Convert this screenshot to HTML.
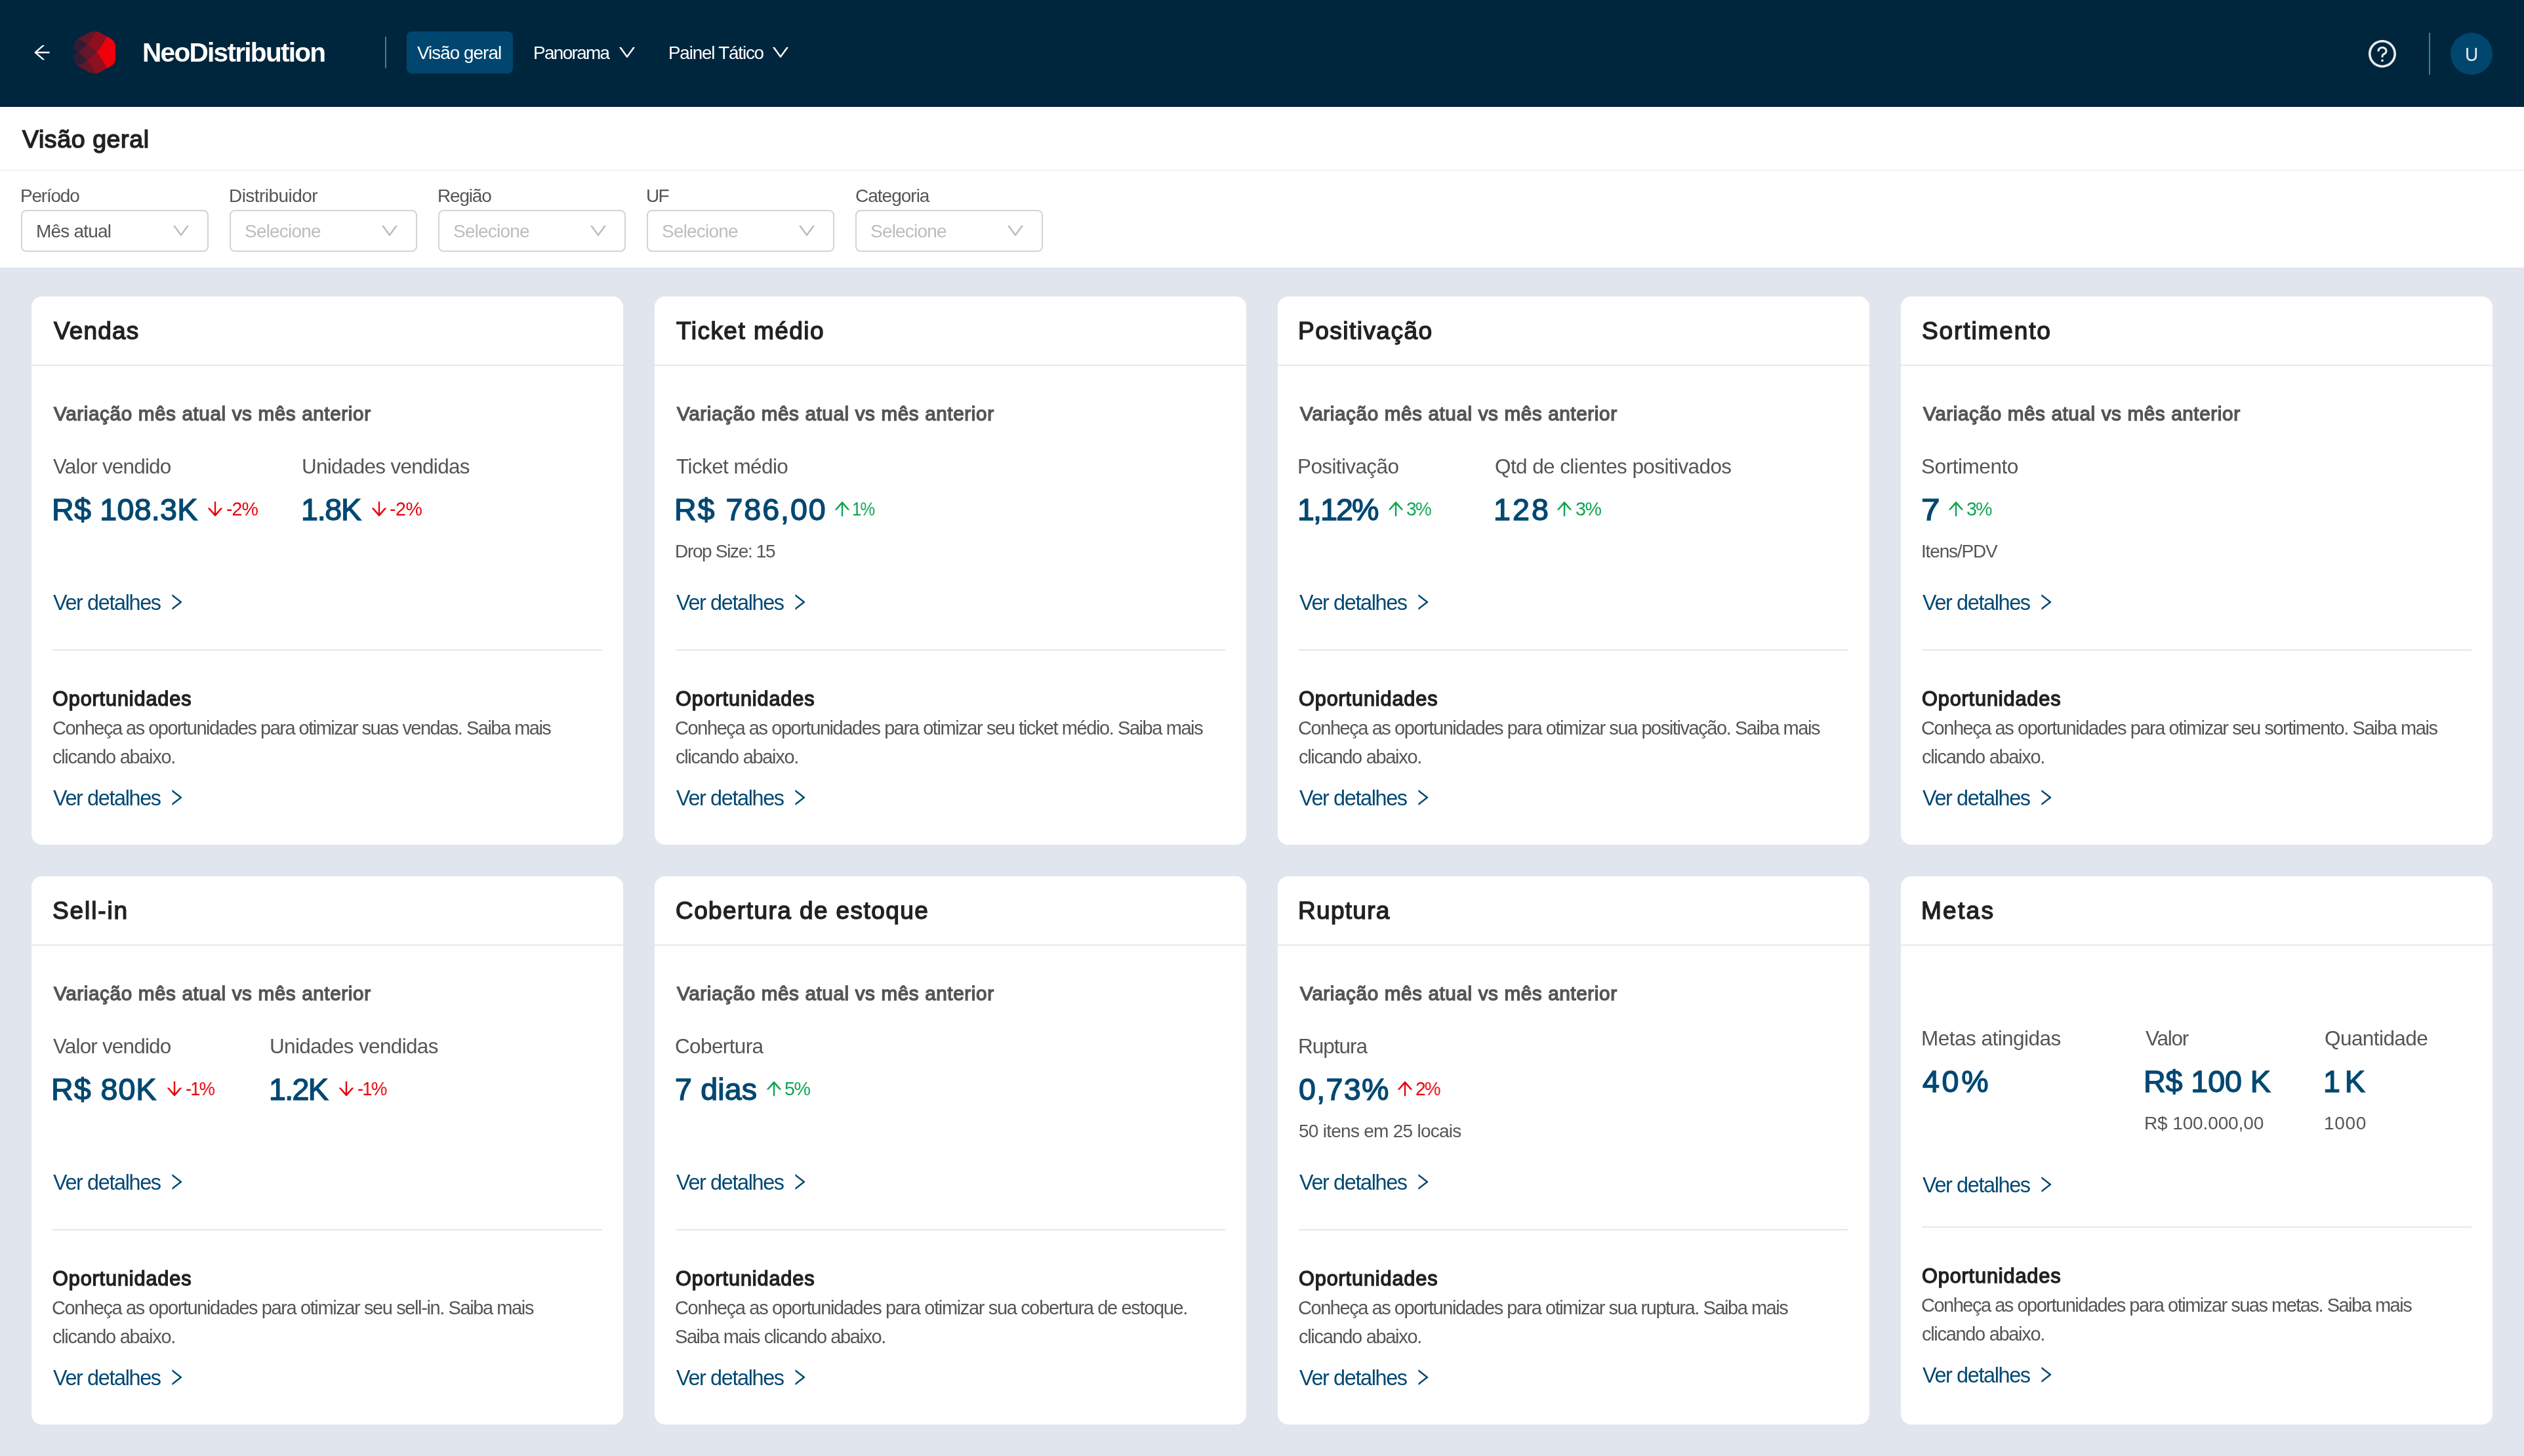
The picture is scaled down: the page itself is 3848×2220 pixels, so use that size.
<!DOCTYPE html>
<html lang="pt-BR"><head><meta charset="utf-8"><title>NeoDistribution - Visão geral</title><style>
html,body{margin:0;padding:0}
body{width:3848px;height:2220px;background:#e1e5ee;position:relative;overflow:hidden;font-family:"Liberation Sans",sans-serif;transform:translateZ(0);}
.t{position:absolute;white-space:pre;line-height:1;font-weight:400;will-change:transform}
.b{position:absolute;box-sizing:border-box}
.i{position:absolute;display:block;overflow:visible}
</style></head>
<body>
<header>
<div class="b" style="left:0px;top:0px;width:3848px;height:163px;background:#00263d;border-bottom:1px solid #001a30;"></div>
<svg class="i" style="left:48px;top:64px" width="32" height="32" viewBox="0 0 1024 1024" fill="#ffffff"><path d="M872 474H286.9l350.2-304c5.6-4.9 2.2-14-5.2-14h-88.5c-3.9 0-7.6 1.4-10.5 3.9L155 487.8a31.96 31.96 0 0 0 0 48.3L535.1 866c1.5 1.3 3.3 2 5.2 2h91.5c7.4 0 10.8-9.2 5.2-14L286.9 550H872c4.4 0 8-3.6 8-8v-60c0-4.4-3.6-8-8-8z"/></svg>
<svg class="i" style="left:112px;top:48px" width="64" height="64" viewBox="0 0 64 64"><defs><clipPath id="hx"><path d="M23.08 2.30A18.5 18.5 0 0 1 40.92 2.30L56.23 10.73A15 15 0 0 1 64.00 23.87L64.00 40.13A15 15 0 0 1 56.23 53.27L40.92 61.70A18.5 18.5 0 0 1 23.08 61.70L7.77 53.27A15 15 0 0 1 0.00 40.13L0.00 23.87A15 15 0 0 1 7.77 10.73Z"/></clipPath><clipPath id="ca1"><path d="M36.6 -4 Q24.2 22.6 -3 39 L-3 80 L80 80 L80 -4 Z"/></clipPath><clipPath id="ca2"><path d="M52.6 4 Q38 40 4 53.8 L4 80 L80 80 L80 4 Z"/></clipPath><clipPath id="cb1"><path d="M36.6 68 Q24.2 41.4 -3 25 L-3 -16 L80 -16 L80 68 Z"/></clipPath><clipPath id="cb2"><path d="M52.6 60 Q38 24 4 10.2 L4 -16 L80 -16 L80 60 Z"/></clipPath></defs><g clip-path="url(#hx)"><path d="M36.6 -4 Q24.2 22.6 -3 39 L-3 80 L80 80 L80 -4 Z" fill="#301d33"/><path d="M36.6 68 Q24.2 41.4 -3 25 L-3 -16 L80 -16 L80 68 Z" fill="#301d33"/><path d="M52.6 4 Q38 40 4 53.8 L4 80 L80 80 L80 4 Z" fill="#651628"/><path d="M52.6 60 Q38 24 4 10.2 L4 -16 L80 -16 L80 60 Z" fill="#651628"/><path d="M36.6 -4 Q24.2 22.6 -3 39 L-3 80 L80 80 L80 -4 Z" clip-path="url(#cb1)" fill="#651628"/><path d="M52.6 4 Q38 40 4 53.8 L4 80 L80 80 L80 4 Z" clip-path="url(#cb1)" fill="#8f0f1f"/><path d="M52.6 60 Q38 24 4 10.2 L4 -16 L80 -16 L80 60 Z" clip-path="url(#ca1)" fill="#8f0f1f"/><path d="M52.6 4 Q38 40 4 53.8 L4 80 L80 80 L80 4 Z" clip-path="url(#cb2)" fill="#f0000a"/></g></svg>
<div id="brand" class="t " style="left:217px;top:60px;font-size:40.6px;color:#fff;font-weight:700;letter-spacing:-1.728px;">NeoDistribution</div>
<div class="b" style="left:587px;top:56px;width:2px;height:48px;background:#3b7da0;"></div>
<div class="b" style="left:620px;top:48px;width:162px;height:64px;background:#00466f;border-radius:8px;"></div>
<div id="nav1" class="t " style="left:636px;top:67px;font-size:27.8px;color:#fff;letter-spacing:-0.949px;">Visão geral</div>
<div id="nav2" class="t " style="left:813px;top:67px;font-size:27.8px;color:#fff;letter-spacing:-1.607px;">Panorama</div>
<svg class="i" style="left:940px;top:64px" width="32" height="32" viewBox="0 0 1024 1024" fill="#ffffff"><path d="M884 256h-75c-5.100000000000023 0-9.899999999999977 2.5-12.899999999999977 6.600000000000023L512 654.2 227.9 262.6c-3-4.100000000000023-7.800000000000011-6.600000000000023-12.900000000000006-6.600000000000023h-75c-6.5 0-10.300000000000011 7.399999999999977-6.5 12.699999999999989l352.6 486.1c12.799999999999955 17.600000000000023 39 17.600000000000023 51.69999999999999 0l352.6-486.1c3.900000000000091-5.300000000000011.10000000000002274-12.699999999999989-6.399999999999977-12.699999999999989z"/></svg>
<div id="nav3" class="t " style="left:1019px;top:67px;font-size:27.8px;color:#fff;letter-spacing:-1.176px;">Painel Tático</div>
<svg class="i" style="left:1174px;top:64px" width="32" height="32" viewBox="0 0 1024 1024" fill="#ffffff"><path d="M884 256h-75c-5.100000000000023 0-9.899999999999977 2.5-12.899999999999977 6.600000000000023L512 654.2 227.9 262.6c-3-4.100000000000023-7.800000000000011-6.600000000000023-12.900000000000006-6.600000000000023h-75c-6.5 0-10.300000000000011 7.399999999999977-6.5 12.699999999999989l352.6 486.1c12.799999999999955 17.600000000000023 39 17.600000000000023 51.69999999999999 0l352.6-486.1c3.900000000000091-5.300000000000011.10000000000002274-12.699999999999989-6.399999999999977-12.699999999999989z"/></svg>
<svg class="i" style="left:3608px;top:58px" width="48" height="48" viewBox="0 0 1024 1024" fill="#e9ecef"><path d="M512 64C264.6 64 64 264.6 64 512s200.6 448 448 448 448-200.6 448-448S759.4 64 512 64zm0 820c-205.4 0-372-166.6-372-372s166.6-372 372-372 372 166.6 372 372-166.6 372-372 372zM623.6 316.7C593.6 290.4 554 276 512 276s-81.6 14.5-111.6 40.7C369.2 344 352 380.7 352 420v7.6c0 4.4 3.6 8 8 8h48c4.4 0 8-3.6 8-8V420c0-44.1 43.1-80 96-80s96 35.9 96 80c0 31.1-22 59.6-56.1 72.7-21.2 8.1-39.2 22.3-52.1 40.9-13.1 19-19.9 41.8-19.9 64.9V620c0 4.4 3.6 8 8 8h48c4.4 0 8-3.6 8-8v-22.7a48.3 48.3 0 0 1 30.9-44.8c59-22.7 97.1-74.7 97.1-132.5.1-39.3-17.1-76-48.3-103.3zM472 732a40 40 0 1 0 80 0 40 40 0 1 0-80 0z"/></svg>
<div class="b" style="left:3703px;top:50px;width:2px;height:64px;background:#3b7da0;"></div>
<div class="b" style="left:3736px;top:50px;width:64px;height:64px;background:#00466f;border-radius:50%;"></div>
<div id="avatar" class="t " style="left:3758px;top:68px;font-size:29.5px;color:#e9eef2;letter-spacing:0.000px;transform:scaleX(0.9499);transform-origin:0 0;">U</div>
</header>
<section>
<div class="b" style="left:0px;top:163px;width:3848px;height:245px;background:#fff;"></div>
<div id="title" class="t " style="left:34px;top:194px;font-size:37.5px;color:#222222;-webkit-text-stroke:1.5px #222222;letter-spacing:0.603px;">Visão geral</div>
<div class="b" style="left:0px;top:259px;width:3848px;height:1px;background:#e7e7e7;"></div>
<div id="flab0" class="t " style="left:31px;top:285px;font-size:28px;color:#555555;letter-spacing:-1.217px;">Período</div>
<div class="b" style="left:32px;top:320px;width:286px;height:64px;border:2px solid #d4d4d4;border-radius:8px;box-sizing:border-box;background:#fff;"></div>
<div id="fval0" class="t " style="left:55px;top:339px;font-size:28px;color:#555555;letter-spacing:-0.794px;">Mês atual</div>
<svg class="i" style="left:260px;top:336px" width="32" height="32" viewBox="0 0 1024 1024" fill="#bcbcbc"><path d="M884 256h-75c-5.100000000000023 0-9.899999999999977 2.5-12.899999999999977 6.600000000000023L512 654.2 227.9 262.6c-3-4.100000000000023-7.800000000000011-6.600000000000023-12.900000000000006-6.600000000000023h-75c-6.5 0-10.300000000000011 7.399999999999977-6.5 12.699999999999989l352.6 486.1c12.799999999999955 17.600000000000023 39 17.600000000000023 51.69999999999999 0l352.6-486.1c3.900000000000091-5.300000000000011.10000000000002274-12.699999999999989-6.399999999999977-12.699999999999989z"/></svg>
<div id="flab1" class="t " style="left:349px;top:285px;font-size:28px;color:#555555;letter-spacing:-0.547px;">Distribuidor</div>
<div class="b" style="left:350px;top:320px;width:286px;height:64px;border:2px solid #d4d4d4;border-radius:8px;box-sizing:border-box;background:#fff;"></div>
<div id="fval1" class="t " style="left:373px;top:339px;font-size:28px;color:#bdbdbd;letter-spacing:-0.795px;">Selecione</div>
<svg class="i" style="left:578px;top:336px" width="32" height="32" viewBox="0 0 1024 1024" fill="#bcbcbc"><path d="M884 256h-75c-5.100000000000023 0-9.899999999999977 2.5-12.899999999999977 6.600000000000023L512 654.2 227.9 262.6c-3-4.100000000000023-7.800000000000011-6.600000000000023-12.900000000000006-6.600000000000023h-75c-6.5 0-10.300000000000011 7.399999999999977-6.5 12.699999999999989l352.6 486.1c12.799999999999955 17.600000000000023 39 17.600000000000023 51.69999999999999 0l352.6-486.1c3.900000000000091-5.300000000000011.10000000000002274-12.699999999999989-6.399999999999977-12.699999999999989z"/></svg>
<div id="flab2" class="t " style="left:667px;top:285px;font-size:28px;color:#555555;letter-spacing:-1.206px;">Região</div>
<div class="b" style="left:668px;top:320px;width:286px;height:64px;border:2px solid #d4d4d4;border-radius:8px;box-sizing:border-box;background:#fff;"></div>
<div id="fval2" class="t " style="left:691px;top:339px;font-size:28px;color:#bdbdbd;letter-spacing:-0.795px;">Selecione</div>
<svg class="i" style="left:896px;top:336px" width="32" height="32" viewBox="0 0 1024 1024" fill="#bcbcbc"><path d="M884 256h-75c-5.100000000000023 0-9.899999999999977 2.5-12.899999999999977 6.600000000000023L512 654.2 227.9 262.6c-3-4.100000000000023-7.800000000000011-6.600000000000023-12.900000000000006-6.600000000000023h-75c-6.5 0-10.300000000000011 7.399999999999977-6.5 12.699999999999989l352.6 486.1c12.799999999999955 17.600000000000023 39 17.600000000000023 51.69999999999999 0l352.6-486.1c3.900000000000091-5.300000000000011.10000000000002274-12.699999999999989-6.399999999999977-12.699999999999989z"/></svg>
<div id="flab3" class="t " style="left:985px;top:285px;font-size:28px;color:#555555;letter-spacing:-1.600px;">UF</div>
<div class="b" style="left:986px;top:320px;width:286px;height:64px;border:2px solid #d4d4d4;border-radius:8px;box-sizing:border-box;background:#fff;"></div>
<div id="fval3" class="t " style="left:1009px;top:339px;font-size:28px;color:#bdbdbd;letter-spacing:-0.795px;">Selecione</div>
<svg class="i" style="left:1214px;top:336px" width="32" height="32" viewBox="0 0 1024 1024" fill="#bcbcbc"><path d="M884 256h-75c-5.100000000000023 0-9.899999999999977 2.5-12.899999999999977 6.600000000000023L512 654.2 227.9 262.6c-3-4.100000000000023-7.800000000000011-6.600000000000023-12.900000000000006-6.600000000000023h-75c-6.5 0-10.300000000000011 7.399999999999977-6.5 12.699999999999989l352.6 486.1c12.799999999999955 17.600000000000023 39 17.600000000000023 51.69999999999999 0l352.6-486.1c3.900000000000091-5.300000000000011.10000000000002274-12.699999999999989-6.399999999999977-12.699999999999989z"/></svg>
<div id="flab4" class="t " style="left:1304px;top:285px;font-size:28px;color:#555555;letter-spacing:-0.997px;">Categoria</div>
<div class="b" style="left:1304px;top:320px;width:286px;height:64px;border:2px solid #d4d4d4;border-radius:8px;box-sizing:border-box;background:#fff;"></div>
<div id="fval4" class="t " style="left:1327px;top:339px;font-size:28px;color:#bdbdbd;letter-spacing:-0.795px;">Selecione</div>
<svg class="i" style="left:1532px;top:336px" width="32" height="32" viewBox="0 0 1024 1024" fill="#bcbcbc"><path d="M884 256h-75c-5.100000000000023 0-9.899999999999977 2.5-12.899999999999977 6.600000000000023L512 654.2 227.9 262.6c-3-4.100000000000023-7.800000000000011-6.600000000000023-12.900000000000006-6.600000000000023h-75c-6.5 0-10.300000000000011 7.399999999999977-6.5 12.699999999999989l352.6 486.1c12.799999999999955 17.600000000000023 39 17.600000000000023 51.69999999999999 0l352.6-486.1c3.900000000000091-5.300000000000011.10000000000002274-12.699999999999989-6.399999999999977-12.699999999999989z"/></svg>
</section>
<main>
<article>
<div class="b" style="left:48px;top:452px;width:902px;height:836px;background:#fff;border-radius:16px;"></div>
<div id="ct0" class="t ctitle" style="left:82px;top:486px;font-size:37px;color:#222222;-webkit-text-stroke:1.45px #222222;letter-spacing:1.160px;">Vendas</div>
<div class="b" style="left:48px;top:556px;width:902px;height:2px;background:#e7e7e7;"></div>
<div id="vs0" class="t vsub" style="left:82px;top:616px;font-size:29.7px;color:#555555;-webkit-text-stroke:1.4px #555555;letter-spacing:0.604px;">Variação mês atual vs mês anterior</div>
<div id="sl0_0" class="t lab" style="left:81px;top:696px;font-size:31.5px;color:#555555;letter-spacing:-0.838px;">Valor vendido</div>
<div id="sv0_0" class="t val" style="left:79px;top:754px;font-size:46.6px;color:#004872;-webkit-text-stroke:1.4px #004872;letter-spacing:0.269px;">R$ 108.3K</div>
<svg class="i" style="left:312px;top:760px" width="32" height="32" viewBox="0 0 1024 1024" fill="#e8000d"><path d="M862 465.3h-81c-4.6 0-9 2-12 5.5L550 723.1V160c0-4.4-3.6-8-8-8h-60c-4.4 0-8 3.6-8 8v563.1L255 470.8c-3-3.5-7.4-5.500000000000001-12-5.500000000000001h-81c-6.8 0-10.5 8.100000000000001-6 13.2L487.9 861a31.96 31.96 0 0 0 48.3 0L868 478.5c4.5-5.2.8-13.2-6-13.2z"/></svg>
<div id="sp0_0" class="t pct" style="left:345px;top:762px;font-size:28.6px;color:#e8000d;letter-spacing:-0.957px;">-2%</div>
<div id="sl0_1" class="t lab" style="left:460px;top:696px;font-size:31.5px;color:#555555;letter-spacing:-0.715px;">Unidades vendidas</div>
<div id="sv0_1" class="t val" style="left:459px;top:754px;font-size:46.6px;color:#004872;-webkit-text-stroke:1.4px #004872;letter-spacing:-1.250px;">1.8K</div>
<svg class="i" style="left:562px;top:760px" width="32" height="32" viewBox="0 0 1024 1024" fill="#e8000d"><path d="M862 465.3h-81c-4.6 0-9 2-12 5.5L550 723.1V160c0-4.4-3.6-8-8-8h-60c-4.4 0-8 3.6-8 8v563.1L255 470.8c-3-3.5-7.4-5.500000000000001-12-5.500000000000001h-81c-6.8 0-10.5 8.100000000000001-6 13.2L487.9 861a31.96 31.96 0 0 0 48.3 0L868 478.5c4.5-5.2.8-13.2-6-13.2z"/></svg>
<div id="sp0_1" class="t pct" style="left:594px;top:762px;font-size:28.6px;color:#e8000d;letter-spacing:-0.457px;">-2%</div>
<div id="la0" class="t lnk" style="left:81px;top:903px;font-size:32.4px;color:#004872;letter-spacing:-1.373px;">Ver detalhes</div>
<svg class="i" style="left:252.5px;top:902px" width="32" height="32" viewBox="0 0 1024 1024" fill="#004872"><path d="M765.7 486.8L314.9 134.7A7.97 7.97 0 0 0 302 141v77.3c0 4.9 2.3 9.6 6.1 12.6l360 281.1-360 281.1c-3.9 3-6.1 7.7-6.1 12.6V883c0 6.7 7.7 10.4 12.9 6.3l450.8-352.1a31.96 31.96 0 0 0 0-50.4z"/></svg>
<div class="b" style="left:80px;top:990px;width:838px;height:2px;background:#e7e7e7;"></div>
<div id="op0" class="t op" style="left:80px;top:1051px;font-size:30.7px;color:#222222;-webkit-text-stroke:1.4px #222222;letter-spacing:0.849px;">Oportunidades</div>
<div id="pb0" class="t par" style="left:80px;top:1140px;font-size:29px;color:#555555;letter-spacing:-1.311px;">clicando abaixo.</div>
<div id="pa0" class="t par" style="left:80px;top:1096px;font-size:29px;color:#555555;letter-spacing:-1.507px;">Conheça as oportunidades para otimizar suas vendas. Saiba mais</div>
<div id="lb0" class="t lnk" style="left:81px;top:1201px;font-size:32.4px;color:#004872;letter-spacing:-1.373px;">Ver detalhes</div>
<svg class="i" style="left:252.5px;top:1200px" width="32" height="32" viewBox="0 0 1024 1024" fill="#004872"><path d="M765.7 486.8L314.9 134.7A7.97 7.97 0 0 0 302 141v77.3c0 4.9 2.3 9.6 6.1 12.6l360 281.1-360 281.1c-3.9 3-6.1 7.7-6.1 12.6V883c0 6.7 7.7 10.4 12.9 6.3l450.8-352.1a31.96 31.96 0 0 0 0-50.4z"/></svg>
</article>
<article>
<div class="b" style="left:998px;top:452px;width:902px;height:836px;background:#fff;border-radius:16px;"></div>
<div id="ct1" class="t ctitle" style="left:1031px;top:486px;font-size:37px;color:#222222;-webkit-text-stroke:1.45px #222222;letter-spacing:1.478px;">Ticket médio</div>
<div class="b" style="left:998px;top:556px;width:902px;height:2px;background:#e7e7e7;"></div>
<div id="vs1" class="t vsub" style="left:1032px;top:616px;font-size:29.7px;color:#555555;-webkit-text-stroke:1.4px #555555;letter-spacing:0.604px;">Variação mês atual vs mês anterior</div>
<div id="sl1_0" class="t lab" style="left:1031px;top:696px;font-size:31.5px;color:#555555;letter-spacing:-0.593px;">Ticket médio</div>
<div id="sv1_0" class="t val" style="left:1028px;top:754px;font-size:46.6px;color:#004872;-webkit-text-stroke:1.4px #004872;letter-spacing:1.961px;">R$ 786,00</div>
<div id="ss1_0" class="t sub" style="left:1029px;top:827px;font-size:28px;color:#555555;letter-spacing:-1.333px;">Drop Size: 15</div>
<svg class="i" style="left:1268px;top:760px" width="32" height="32" viewBox="0 0 1024 1024" fill="#0fa552"><path d="M868 545.5L536.1 163a31.96 31.96 0 0 0-48.3 0L156 545.5a7.97 7.97 0 0 0 6 13.2h81c4.6 0 9-2 12.1-5.5L474 300.9V864c0 4.4 3.6 8 8 8h60c4.4 0 8-3.6 8-8V300.9l218.9 252.3c3 3.5 7.4 5.5 12.1 5.5h81c6.8 0 10.5-8 6-13.2z"/></svg>
<div id="sp1_0" class="t pct" style="left:1299px;top:762px;font-size:28.6px;color:#0fa552;letter-spacing:-2.002px;transform:scaleX(0.8916);transform-origin:0 0;">1%</div>
<div id="la1" class="t lnk" style="left:1031px;top:903px;font-size:32.4px;color:#004872;letter-spacing:-1.373px;">Ver detalhes</div>
<svg class="i" style="left:1202.5px;top:902px" width="32" height="32" viewBox="0 0 1024 1024" fill="#004872"><path d="M765.7 486.8L314.9 134.7A7.97 7.97 0 0 0 302 141v77.3c0 4.9 2.3 9.6 6.1 12.6l360 281.1-360 281.1c-3.9 3-6.1 7.7-6.1 12.6V883c0 6.7 7.7 10.4 12.9 6.3l450.8-352.1a31.96 31.96 0 0 0 0-50.4z"/></svg>
<div class="b" style="left:1030px;top:990px;width:838px;height:2px;background:#e7e7e7;"></div>
<div id="op1" class="t op" style="left:1030px;top:1051px;font-size:30.7px;color:#222222;-webkit-text-stroke:1.4px #222222;letter-spacing:0.849px;">Oportunidades</div>
<div id="pb1" class="t par" style="left:1030px;top:1140px;font-size:29px;color:#555555;letter-spacing:-1.311px;">clicando abaixo.</div>
<div id="pa1" class="t par" style="left:1029px;top:1096px;font-size:29px;color:#555555;letter-spacing:-1.422px;">Conheça as oportunidades para otimizar seu ticket médio. Saiba mais</div>
<div id="lb1" class="t lnk" style="left:1031px;top:1201px;font-size:32.4px;color:#004872;letter-spacing:-1.373px;">Ver detalhes</div>
<svg class="i" style="left:1202.5px;top:1200px" width="32" height="32" viewBox="0 0 1024 1024" fill="#004872"><path d="M765.7 486.8L314.9 134.7A7.97 7.97 0 0 0 302 141v77.3c0 4.9 2.3 9.6 6.1 12.6l360 281.1-360 281.1c-3.9 3-6.1 7.7-6.1 12.6V883c0 6.7 7.7 10.4 12.9 6.3l450.8-352.1a31.96 31.96 0 0 0 0-50.4z"/></svg>
</article>
<article>
<div class="b" style="left:1948px;top:452px;width:902px;height:836px;background:#fff;border-radius:16px;"></div>
<div id="ct2" class="t ctitle" style="left:1979px;top:486px;font-size:37px;color:#222222;-webkit-text-stroke:1.45px #222222;letter-spacing:1.484px;">Positivação</div>
<div class="b" style="left:1948px;top:556px;width:902px;height:2px;background:#e7e7e7;"></div>
<div id="vs2" class="t vsub" style="left:1982px;top:616px;font-size:29.7px;color:#555555;-webkit-text-stroke:1.4px #555555;letter-spacing:0.604px;">Variação mês atual vs mês anterior</div>
<div id="sl2_0" class="t lab" style="left:1978px;top:696px;font-size:31.5px;color:#555555;letter-spacing:-0.617px;">Positivação</div>
<div id="sv2_0" class="t val" style="left:1978px;top:754px;font-size:46.6px;color:#004872;-webkit-text-stroke:1.4px #004872;letter-spacing:-1.916px;">1,12%</div>
<svg class="i" style="left:2111.5px;top:760px" width="32" height="32" viewBox="0 0 1024 1024" fill="#0fa552"><path d="M868 545.5L536.1 163a31.96 31.96 0 0 0-48.3 0L156 545.5a7.97 7.97 0 0 0 6 13.2h81c4.6 0 9-2 12.1-5.5L474 300.9V864c0 4.4 3.6 8 8 8h60c4.4 0 8-3.6 8-8V300.9l218.9 252.3c3 3.5 7.4 5.5 12.1 5.5h81c6.8 0 10.5-8 6-13.2z"/></svg>
<div id="sp2_0" class="t pct" style="left:2144px;top:762px;font-size:28.6px;color:#0fa552;letter-spacing:-2.002px;transform:scaleX(0.9839);transform-origin:0 0;">3%</div>
<div id="sl2_1" class="t lab" style="left:2279px;top:696px;font-size:31.5px;color:#555555;letter-spacing:-0.590px;">Qtd de clientes positivados</div>
<div id="sv2_1" class="t val" style="left:2277px;top:754px;font-size:46.6px;color:#004872;-webkit-text-stroke:1.4px #004872;letter-spacing:3.118px;">128</div>
<svg class="i" style="left:2369.4px;top:760px" width="32" height="32" viewBox="0 0 1024 1024" fill="#0fa552"><path d="M868 545.5L536.1 163a31.96 31.96 0 0 0-48.3 0L156 545.5a7.97 7.97 0 0 0 6 13.2h81c4.6 0 9-2 12.1-5.5L474 300.9V864c0 4.4 3.6 8 8 8h60c4.4 0 8-3.6 8-8V300.9l218.9 252.3c3 3.5 7.4 5.5 12.1 5.5h81c6.8 0 10.5-8 6-13.2z"/></svg>
<div id="sp2_1" class="t pct" style="left:2402px;top:762px;font-size:28.6px;color:#0fa552;letter-spacing:-1.514px;">3%</div>
<div id="la2" class="t lnk" style="left:1981px;top:903px;font-size:32.4px;color:#004872;letter-spacing:-1.373px;">Ver detalhes</div>
<svg class="i" style="left:2152.5px;top:902px" width="32" height="32" viewBox="0 0 1024 1024" fill="#004872"><path d="M765.7 486.8L314.9 134.7A7.97 7.97 0 0 0 302 141v77.3c0 4.9 2.3 9.6 6.1 12.6l360 281.1-360 281.1c-3.9 3-6.1 7.7-6.1 12.6V883c0 6.7 7.7 10.4 12.9 6.3l450.8-352.1a31.96 31.96 0 0 0 0-50.4z"/></svg>
<div class="b" style="left:1980px;top:990px;width:838px;height:2px;background:#e7e7e7;"></div>
<div id="op2" class="t op" style="left:1980px;top:1051px;font-size:30.7px;color:#222222;-webkit-text-stroke:1.4px #222222;letter-spacing:0.849px;">Oportunidades</div>
<div id="pb2" class="t par" style="left:1980px;top:1140px;font-size:29px;color:#555555;letter-spacing:-1.311px;">clicando abaixo.</div>
<div id="pa2" class="t par" style="left:1979px;top:1096px;font-size:29px;color:#555555;letter-spacing:-1.437px;">Conheça as oportunidades para otimizar sua positivação. Saiba mais</div>
<div id="lb2" class="t lnk" style="left:1981px;top:1201px;font-size:32.4px;color:#004872;letter-spacing:-1.373px;">Ver detalhes</div>
<svg class="i" style="left:2152.5px;top:1200px" width="32" height="32" viewBox="0 0 1024 1024" fill="#004872"><path d="M765.7 486.8L314.9 134.7A7.97 7.97 0 0 0 302 141v77.3c0 4.9 2.3 9.6 6.1 12.6l360 281.1-360 281.1c-3.9 3-6.1 7.7-6.1 12.6V883c0 6.7 7.7 10.4 12.9 6.3l450.8-352.1a31.96 31.96 0 0 0 0-50.4z"/></svg>
</article>
<article>
<div class="b" style="left:2898px;top:452px;width:902px;height:836px;background:#fff;border-radius:16px;"></div>
<div id="ct3" class="t ctitle" style="left:2930px;top:486px;font-size:37px;color:#222222;-webkit-text-stroke:1.45px #222222;letter-spacing:1.887px;">Sortimento</div>
<div class="b" style="left:2898px;top:556px;width:902px;height:2px;background:#e7e7e7;"></div>
<div id="vs3" class="t vsub" style="left:2932px;top:616px;font-size:29.7px;color:#555555;-webkit-text-stroke:1.4px #555555;letter-spacing:0.604px;">Variação mês atual vs mês anterior</div>
<div id="sl3_0" class="t lab" style="left:2929px;top:696px;font-size:31.5px;color:#555555;letter-spacing:-0.446px;">Sortimento</div>
<div id="sv3_0" class="t val" style="left:2929px;top:754px;font-size:46.6px;color:#004872;-webkit-text-stroke:1.4px #004872;letter-spacing:-0.500px;transform:scaleX(1.1034);transform-origin:0 0;">7</div>
<div id="ss3_0" class="t sub" style="left:2929px;top:827px;font-size:28px;color:#555555;letter-spacing:-1.166px;">Itens/PDV</div>
<svg class="i" style="left:2965.5px;top:760px" width="32" height="32" viewBox="0 0 1024 1024" fill="#0fa552"><path d="M868 545.5L536.1 163a31.96 31.96 0 0 0-48.3 0L156 545.5a7.97 7.97 0 0 0 6 13.2h81c4.6 0 9-2 12.1-5.5L474 300.9V864c0 4.4 3.6 8 8 8h60c4.4 0 8-3.6 8-8V300.9l218.9 252.3c3 3.5 7.4 5.5 12.1 5.5h81c6.8 0 10.5-8 6-13.2z"/></svg>
<div id="sp3_0" class="t pct" style="left:2998px;top:762px;font-size:28.6px;color:#0fa552;letter-spacing:-2.002px;transform:scaleX(0.9917);transform-origin:0 0;">3%</div>
<div id="la3" class="t lnk" style="left:2931px;top:903px;font-size:32.4px;color:#004872;letter-spacing:-1.373px;">Ver detalhes</div>
<svg class="i" style="left:3102.5px;top:902px" width="32" height="32" viewBox="0 0 1024 1024" fill="#004872"><path d="M765.7 486.8L314.9 134.7A7.97 7.97 0 0 0 302 141v77.3c0 4.9 2.3 9.6 6.1 12.6l360 281.1-360 281.1c-3.9 3-6.1 7.7-6.1 12.6V883c0 6.7 7.7 10.4 12.9 6.3l450.8-352.1a31.96 31.96 0 0 0 0-50.4z"/></svg>
<div class="b" style="left:2930px;top:990px;width:838px;height:2px;background:#e7e7e7;"></div>
<div id="op3" class="t op" style="left:2930px;top:1051px;font-size:30.7px;color:#222222;-webkit-text-stroke:1.4px #222222;letter-spacing:0.849px;">Oportunidades</div>
<div id="pb3" class="t par" style="left:2930px;top:1140px;font-size:29px;color:#555555;letter-spacing:-1.311px;">clicando abaixo.</div>
<div id="pa3" class="t par" style="left:2929px;top:1096px;font-size:29px;color:#555555;letter-spacing:-1.440px;">Conheça as oportunidades para otimizar seu sortimento. Saiba mais</div>
<div id="lb3" class="t lnk" style="left:2931px;top:1201px;font-size:32.4px;color:#004872;letter-spacing:-1.373px;">Ver detalhes</div>
<svg class="i" style="left:3102.5px;top:1200px" width="32" height="32" viewBox="0 0 1024 1024" fill="#004872"><path d="M765.7 486.8L314.9 134.7A7.97 7.97 0 0 0 302 141v77.3c0 4.9 2.3 9.6 6.1 12.6l360 281.1-360 281.1c-3.9 3-6.1 7.7-6.1 12.6V883c0 6.7 7.7 10.4 12.9 6.3l450.8-352.1a31.96 31.96 0 0 0 0-50.4z"/></svg>
</article>
<article>
<div class="b" style="left:48px;top:1336px;width:902px;height:836px;background:#fff;border-radius:16px;"></div>
<div id="ct4" class="t ctitle" style="left:80px;top:1370px;font-size:37px;color:#222222;-webkit-text-stroke:1.45px #222222;letter-spacing:1.888px;">Sell-in</div>
<div class="b" style="left:48px;top:1440px;width:902px;height:2px;background:#e7e7e7;"></div>
<div id="vs4" class="t vsub" style="left:82px;top:1500px;font-size:29.7px;color:#555555;-webkit-text-stroke:1.4px #555555;letter-spacing:0.604px;">Variação mês atual vs mês anterior</div>
<div id="sl4_0" class="t lab" style="left:81px;top:1580px;font-size:31.5px;color:#555555;letter-spacing:-0.838px;">Valor vendido</div>
<div id="sv4_0" class="t val" style="left:78px;top:1638px;font-size:46.6px;color:#004872;-webkit-text-stroke:1.4px #004872;letter-spacing:0.991px;">R$ 80K</div>
<svg class="i" style="left:250.1px;top:1644px" width="32" height="32" viewBox="0 0 1024 1024" fill="#e8000d"><path d="M862 465.3h-81c-4.6 0-9 2-12 5.5L550 723.1V160c0-4.4-3.6-8-8-8h-60c-4.4 0-8 3.6-8 8v563.1L255 470.8c-3-3.5-7.4-5.500000000000001-12-5.500000000000001h-81c-6.8 0-10.5 8.100000000000001-6 13.2L487.9 861a31.96 31.96 0 0 0 48.3 0L868 478.5c4.5-5.2.8-13.2-6-13.2z"/></svg>
<div id="sp4_0" class="t pct" style="left:283px;top:1646px;font-size:28.6px;color:#e8000d;letter-spacing:-2.002px;transform:scaleX(0.9578);transform-origin:0 0;">-1%</div>
<div id="sl4_1" class="t lab" style="left:411px;top:1580px;font-size:31.5px;color:#555555;letter-spacing:-0.655px;">Unidades vendidas</div>
<div id="sv4_1" class="t val" style="left:410px;top:1638px;font-size:46.6px;color:#004872;-webkit-text-stroke:1.4px #004872;letter-spacing:-1.668px;">1.2K</div>
<svg class="i" style="left:511.6px;top:1644px" width="32" height="32" viewBox="0 0 1024 1024" fill="#e8000d"><path d="M862 465.3h-81c-4.6 0-9 2-12 5.5L550 723.1V160c0-4.4-3.6-8-8-8h-60c-4.4 0-8 3.6-8 8v563.1L255 470.8c-3-3.5-7.4-5.500000000000001-12-5.500000000000001h-81c-6.8 0-10.5 8.100000000000001-6 13.2L487.9 861a31.96 31.96 0 0 0 48.3 0L868 478.5c4.5-5.2.8-13.2-6-13.2z"/></svg>
<div id="sp4_1" class="t pct" style="left:545px;top:1646px;font-size:28.6px;color:#e8000d;letter-spacing:-2.002px;transform:scaleX(0.9662);transform-origin:0 0;">-1%</div>
<div id="la4" class="t lnk" style="left:81px;top:1787px;font-size:32.4px;color:#004872;letter-spacing:-1.373px;">Ver detalhes</div>
<svg class="i" style="left:252.5px;top:1786px" width="32" height="32" viewBox="0 0 1024 1024" fill="#004872"><path d="M765.7 486.8L314.9 134.7A7.97 7.97 0 0 0 302 141v77.3c0 4.9 2.3 9.6 6.1 12.6l360 281.1-360 281.1c-3.9 3-6.1 7.7-6.1 12.6V883c0 6.7 7.7 10.4 12.9 6.3l450.8-352.1a31.96 31.96 0 0 0 0-50.4z"/></svg>
<div class="b" style="left:80px;top:1874px;width:838px;height:2px;background:#e7e7e7;"></div>
<div id="op4" class="t op" style="left:80px;top:1935px;font-size:30.7px;color:#222222;-webkit-text-stroke:1.4px #222222;letter-spacing:0.849px;">Oportunidades</div>
<div id="pb4" class="t par" style="left:80px;top:2024px;font-size:29px;color:#555555;letter-spacing:-1.311px;">clicando abaixo.</div>
<div id="pa4" class="t par" style="left:79px;top:1980px;font-size:29px;color:#555555;letter-spacing:-1.395px;">Conheça as oportunidades para otimizar seu sell-in. Saiba mais</div>
<div id="lb4" class="t lnk" style="left:81px;top:2085px;font-size:32.4px;color:#004872;letter-spacing:-1.373px;">Ver detalhes</div>
<svg class="i" style="left:252.5px;top:2084px" width="32" height="32" viewBox="0 0 1024 1024" fill="#004872"><path d="M765.7 486.8L314.9 134.7A7.97 7.97 0 0 0 302 141v77.3c0 4.9 2.3 9.6 6.1 12.6l360 281.1-360 281.1c-3.9 3-6.1 7.7-6.1 12.6V883c0 6.7 7.7 10.4 12.9 6.3l450.8-352.1a31.96 31.96 0 0 0 0-50.4z"/></svg>
</article>
<article>
<div class="b" style="left:998px;top:1336px;width:902px;height:836px;background:#fff;border-radius:16px;"></div>
<div id="ct5" class="t ctitle" style="left:1030px;top:1370px;font-size:37px;color:#222222;-webkit-text-stroke:1.45px #222222;letter-spacing:1.410px;">Cobertura de estoque</div>
<div class="b" style="left:998px;top:1440px;width:902px;height:2px;background:#e7e7e7;"></div>
<div id="vs5" class="t vsub" style="left:1032px;top:1500px;font-size:29.7px;color:#555555;-webkit-text-stroke:1.4px #555555;letter-spacing:0.604px;">Variação mês atual vs mês anterior</div>
<div id="sl5_0" class="t lab" style="left:1029px;top:1580px;font-size:31.5px;color:#555555;letter-spacing:-0.629px;">Cobertura</div>
<div id="sv5_0" class="t val" style="left:1029px;top:1638px;font-size:46.6px;color:#004872;-webkit-text-stroke:1.4px #004872;letter-spacing:0.161px;">7 dias</div>
<svg class="i" style="left:1163.9px;top:1644px" width="32" height="32" viewBox="0 0 1024 1024" fill="#0fa552"><path d="M868 545.5L536.1 163a31.96 31.96 0 0 0-48.3 0L156 545.5a7.97 7.97 0 0 0 6 13.2h81c4.6 0 9-2 12.1-5.5L474 300.9V864c0 4.4 3.6 8 8 8h60c4.4 0 8-3.6 8-8V300.9l218.9 252.3c3 3.5 7.4 5.5 12.1 5.5h81c6.8 0 10.5-8 6-13.2z"/></svg>
<div id="sp5_0" class="t pct" style="left:1196px;top:1646px;font-size:28.6px;color:#0fa552;letter-spacing:-1.506px;">5%</div>
<div id="la5" class="t lnk" style="left:1031px;top:1787px;font-size:32.4px;color:#004872;letter-spacing:-1.373px;">Ver detalhes</div>
<svg class="i" style="left:1202.5px;top:1786px" width="32" height="32" viewBox="0 0 1024 1024" fill="#004872"><path d="M765.7 486.8L314.9 134.7A7.97 7.97 0 0 0 302 141v77.3c0 4.9 2.3 9.6 6.1 12.6l360 281.1-360 281.1c-3.9 3-6.1 7.7-6.1 12.6V883c0 6.7 7.7 10.4 12.9 6.3l450.8-352.1a31.96 31.96 0 0 0 0-50.4z"/></svg>
<div class="b" style="left:1030px;top:1874px;width:838px;height:2px;background:#e7e7e7;"></div>
<div id="op5" class="t op" style="left:1030px;top:1935px;font-size:30.7px;color:#222222;-webkit-text-stroke:1.4px #222222;letter-spacing:0.849px;">Oportunidades</div>
<div id="pb5" class="t par" style="left:1029px;top:2024px;font-size:29px;color:#555555;letter-spacing:-1.432px;">Saiba mais clicando abaixo.</div>
<div id="pa5" class="t par" style="left:1029px;top:1980px;font-size:29px;color:#555555;letter-spacing:-1.348px;">Conheça as oportunidades para otimizar sua cobertura de estoque.</div>
<div id="lb5" class="t lnk" style="left:1031px;top:2085px;font-size:32.4px;color:#004872;letter-spacing:-1.373px;">Ver detalhes</div>
<svg class="i" style="left:1202.5px;top:2084px" width="32" height="32" viewBox="0 0 1024 1024" fill="#004872"><path d="M765.7 486.8L314.9 134.7A7.97 7.97 0 0 0 302 141v77.3c0 4.9 2.3 9.6 6.1 12.6l360 281.1-360 281.1c-3.9 3-6.1 7.7-6.1 12.6V883c0 6.7 7.7 10.4 12.9 6.3l450.8-352.1a31.96 31.96 0 0 0 0-50.4z"/></svg>
</article>
<article>
<div class="b" style="left:1948px;top:1336px;width:902px;height:836px;background:#fff;border-radius:16px;"></div>
<div id="ct6" class="t ctitle" style="left:1979px;top:1370px;font-size:37px;color:#222222;-webkit-text-stroke:1.45px #222222;letter-spacing:1.293px;">Ruptura</div>
<div class="b" style="left:1948px;top:1440px;width:902px;height:2px;background:#e7e7e7;"></div>
<div id="vs6" class="t vsub" style="left:1982px;top:1500px;font-size:29.7px;color:#555555;-webkit-text-stroke:1.4px #555555;letter-spacing:0.604px;">Variação mês atual vs mês anterior</div>
<div id="sl6_0" class="t lab" style="left:1979px;top:1580px;font-size:31.5px;color:#555555;letter-spacing:-0.994px;">Ruptura</div>
<div id="sv6_0" class="t val" style="left:1980px;top:1638px;font-size:46.6px;color:#004872;-webkit-text-stroke:1.4px #004872;letter-spacing:1.304px;">0,73%</div>
<div id="ss6_0" class="t sub" style="left:1980px;top:1711px;font-size:28px;color:#555555;letter-spacing:-0.734px;">50 itens em 25 locais</div>
<svg class="i" style="left:2126.1px;top:1644px" width="32" height="32" viewBox="0 0 1024 1024" fill="#e8000d"><path d="M868 545.5L536.1 163a31.96 31.96 0 0 0-48.3 0L156 545.5a7.97 7.97 0 0 0 6 13.2h81c4.6 0 9-2 12.1-5.5L474 300.9V864c0 4.4 3.6 8 8 8h60c4.4 0 8-3.6 8-8V300.9l218.9 252.3c3 3.5 7.4 5.5 12.1 5.5h81c6.8 0 10.5-8 6-13.2z"/></svg>
<div id="sp6_0" class="t pct" style="left:2158px;top:1646px;font-size:28.6px;color:#e8000d;letter-spacing:-2.002px;transform:scaleX(0.9796);transform-origin:0 0;">2%</div>
<div id="la6" class="t lnk" style="left:1981px;top:1787px;font-size:32.4px;color:#004872;letter-spacing:-1.373px;">Ver detalhes</div>
<svg class="i" style="left:2152.5px;top:1786px" width="32" height="32" viewBox="0 0 1024 1024" fill="#004872"><path d="M765.7 486.8L314.9 134.7A7.97 7.97 0 0 0 302 141v77.3c0 4.9 2.3 9.6 6.1 12.6l360 281.1-360 281.1c-3.9 3-6.1 7.7-6.1 12.6V883c0 6.7 7.7 10.4 12.9 6.3l450.8-352.1a31.96 31.96 0 0 0 0-50.4z"/></svg>
<div class="b" style="left:1980px;top:1874px;width:838px;height:2px;background:#e7e7e7;"></div>
<div id="op6" class="t op" style="left:1980px;top:1935px;font-size:30.7px;color:#222222;-webkit-text-stroke:1.4px #222222;letter-spacing:0.849px;">Oportunidades</div>
<div id="pb6" class="t par" style="left:1980px;top:2024px;font-size:29px;color:#555555;letter-spacing:-1.311px;">clicando abaixo.</div>
<div id="pa6" class="t par" style="left:1979px;top:1980px;font-size:29px;color:#555555;letter-spacing:-1.457px;">Conheça as oportunidades para otimizar sua ruptura. Saiba mais</div>
<div id="lb6" class="t lnk" style="left:1981px;top:2085px;font-size:32.4px;color:#004872;letter-spacing:-1.373px;">Ver detalhes</div>
<svg class="i" style="left:2152.5px;top:2084px" width="32" height="32" viewBox="0 0 1024 1024" fill="#004872"><path d="M765.7 486.8L314.9 134.7A7.97 7.97 0 0 0 302 141v77.3c0 4.9 2.3 9.6 6.1 12.6l360 281.1-360 281.1c-3.9 3-6.1 7.7-6.1 12.6V883c0 6.7 7.7 10.4 12.9 6.3l450.8-352.1a31.96 31.96 0 0 0 0-50.4z"/></svg>
</article>
<article>
<div class="b" style="left:2898px;top:1336px;width:902px;height:836px;background:#fff;border-radius:16px;"></div>
<div id="ct7" class="t ctitle" style="left:2929px;top:1370px;font-size:37px;color:#222222;-webkit-text-stroke:1.45px #222222;letter-spacing:2.283px;">Metas</div>
<div class="b" style="left:2898px;top:1440px;width:902px;height:2px;background:#e7e7e7;"></div>
<div id="sl7_0" class="t lab" style="left:2929px;top:1568px;font-size:31.5px;color:#555555;letter-spacing:-0.521px;">Metas atingidas</div>
<div id="sv7_0" class="t val" style="left:2931px;top:1626px;font-size:46.6px;color:#004872;-webkit-text-stroke:1.4px #004872;letter-spacing:3.691px;">40%</div>
<div id="sl7_1" class="t lab" style="left:3271px;top:1568px;font-size:31.5px;color:#555555;letter-spacing:-1.260px;">Valor</div>
<div id="sv7_1" class="t val" style="left:3268px;top:1626px;font-size:46.6px;color:#004872;-webkit-text-stroke:1.4px #004872;letter-spacing:-0.061px;">R$ 100 K</div>
<div id="ss7_1" class="t sub" style="left:3269px;top:1699px;font-size:28px;color:#555555;letter-spacing:-0.121px;">R$ 100.000,00</div>
<div id="sl7_2" class="t lab" style="left:3544px;top:1568px;font-size:31.5px;color:#555555;letter-spacing:-0.569px;">Quantidade</div>
<div id="sv7_2" class="t val" style="left:3542px;top:1626px;font-size:46.6px;color:#004872;-webkit-text-stroke:1.4px #004872;letter-spacing:-3.095px;">1 K</div>
<div id="ss7_2" class="t sub" style="left:3543px;top:1699px;font-size:28px;color:#555555;letter-spacing:0.672px;">1000</div>
<div id="la7" class="t lnk" style="left:2931px;top:1791px;font-size:32.4px;color:#004872;letter-spacing:-1.373px;">Ver detalhes</div>
<svg class="i" style="left:3102.5px;top:1790px" width="32" height="32" viewBox="0 0 1024 1024" fill="#004872"><path d="M765.7 486.8L314.9 134.7A7.97 7.97 0 0 0 302 141v77.3c0 4.9 2.3 9.6 6.1 12.6l360 281.1-360 281.1c-3.9 3-6.1 7.7-6.1 12.6V883c0 6.7 7.7 10.4 12.9 6.3l450.8-352.1a31.96 31.96 0 0 0 0-50.4z"/></svg>
<div class="b" style="left:2930px;top:1870px;width:838px;height:2px;background:#e7e7e7;"></div>
<div id="op7" class="t op" style="left:2930px;top:1931px;font-size:30.7px;color:#222222;-webkit-text-stroke:1.4px #222222;letter-spacing:0.849px;">Oportunidades</div>
<div id="pb7" class="t par" style="left:2930px;top:2020px;font-size:29px;color:#555555;letter-spacing:-1.311px;">clicando abaixo.</div>
<div id="pa7" class="t par" style="left:2929px;top:1976px;font-size:29px;color:#555555;letter-spacing:-1.493px;">Conheça as oportunidades para otimizar suas metas. Saiba mais</div>
<div id="lb7" class="t lnk" style="left:2931px;top:2081px;font-size:32.4px;color:#004872;letter-spacing:-1.373px;">Ver detalhes</div>
<svg class="i" style="left:3102.5px;top:2080px" width="32" height="32" viewBox="0 0 1024 1024" fill="#004872"><path d="M765.7 486.8L314.9 134.7A7.97 7.97 0 0 0 302 141v77.3c0 4.9 2.3 9.6 6.1 12.6l360 281.1-360 281.1c-3.9 3-6.1 7.7-6.1 12.6V883c0 6.7 7.7 10.4 12.9 6.3l450.8-352.1a31.96 31.96 0 0 0 0-50.4z"/></svg>
</article>
</main>
</body></html>
